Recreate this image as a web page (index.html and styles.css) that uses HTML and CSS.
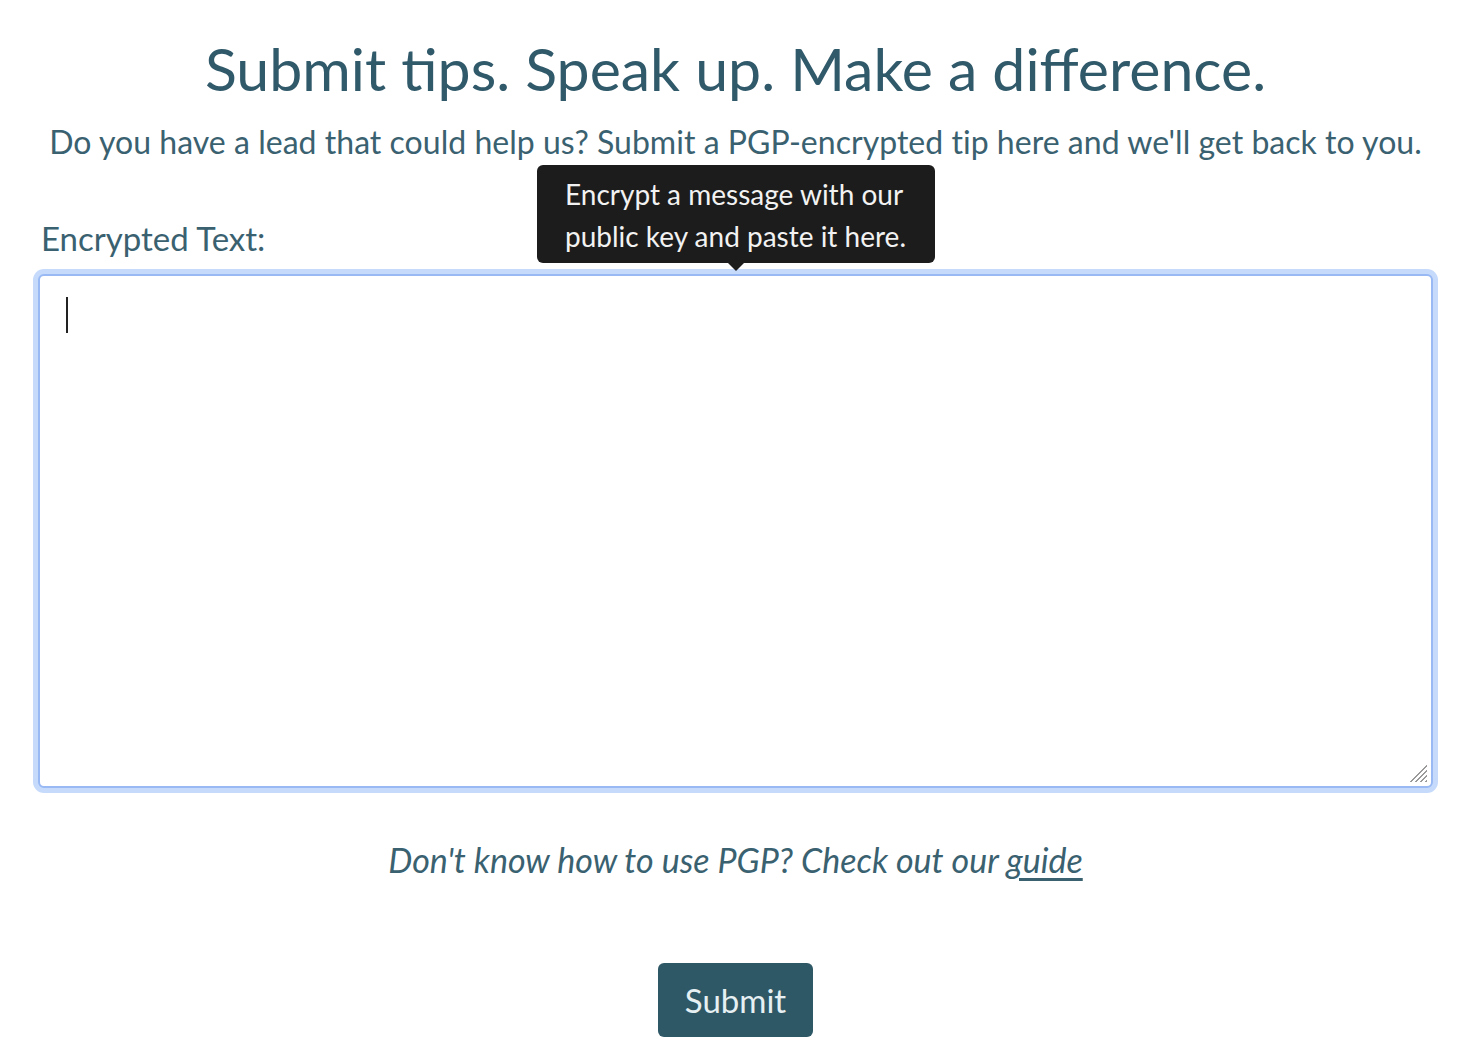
FILE: index.html
```html
<!DOCTYPE html>
<html lang="en">
<head>
<meta charset="utf-8">
<title>Submit tips</title>
<link rel="stylesheet" href="styles.css">
</head>
<body>
<main class="page">
  <h1 class="title">Submit tips. Speak up. Make a difference.</h1>
  <p class="lead">Do you have a lead that could help us? Submit a PGP-encrypted tip here and we'll get back to you.</p>
  <form class="tip-form">
    <div class="field">
      <label class="field-label" for="tip">Encrypted Text:</label>
      <div class="tooltip">Encrypt a message with our<br>public key and paste it here.</div>
      <div class="textarea-wrap">
        <textarea id="tip" class="textarea"></textarea>
        <span class="caret"></span>
        <span class="grip"></span>
      </div>
    </div>
    <p class="help">Don't know how to use PGP? Check out our <a href="#" class="help-link">guide</a></p>
    <div class="actions">
      <button type="button" class="btn">Submit</button>
    </div>
  </form>
</main>
</body>
</html>
```
FILE: styles.css
```css
html, body {
  margin: 0;
  padding: 0;
  background: #ffffff;
}
body {
  font-family: Lato, "Noto Sans", sans-serif;
  color: #30596a;
}
.page {
  padding: 0 49px 0 38px;
}
.title {
  margin: 0;
  padding-top: 34px;
  font-size: 59px;
  font-weight: 400;
  line-height: 70px;
  text-align: center;
  color: #30596a;
}
.lead {
  margin: 18px 0 0;
  font-size: 32px;
  line-height: 40px;
  text-align: center;
  color: #3a6170;
  white-space: nowrap;
  letter-spacing: 0.03px;
}
.field {
  position: relative;
  padding-top: 56px;
}
.field-label {
  display: block;
  padding-left: 3px;
  font-size: 33px;
  line-height: 40px;
  color: #3a6170;
}
.tooltip {
  position: absolute;
  left: 499px;
  top: 3px;
  width: 398px;
  height: 98px;
  box-sizing: border-box;
  padding: 8px 0 0 28px;
  background: #1c1c1c;
  color: #f2f2f2;
  border-radius: 6px;
  font-size: 28px;
  line-height: 42px;
  z-index: 2;
}
.tooltip::after {
  content: "";
  position: absolute;
  left: 191px;
  bottom: -8px;
  border-left: 8px solid transparent;
  border-right: 8px solid transparent;
  border-top: 8px solid #1c1c1c;
}
.textarea-wrap {
  position: relative;
  margin-top: 16px;
}
.textarea {
  display: block;
  width: 100%;
  height: 514px;
  box-sizing: border-box;
  margin: 0;
  border: 2px solid #98b9f4;
  border-radius: 6px;
  box-shadow: 0 0 0 5px #c6dafc;
  outline: none;
  resize: none;
  background: #fff;
  font: inherit;
}
.caret {
  position: absolute;
  left: 28px;
  top: 23px;
  width: 2px;
  height: 36px;
  background: #222;
}
.grip {
  position: absolute;
  right: 6px;
  bottom: 6px;
  width: 20px;
  height: 20px;
  background: repeating-linear-gradient(135deg, transparent 0 2px, #9a9a9a 2px 3.5px);
  clip-path: polygon(100% 0, 100% 100%, 0 100%);
}
.help {
  margin: 52px 0 0;
  font-size: 34px;
  line-height: 40px;
  font-style: italic;
  text-align: center;
  color: #3a6170;
}
.help-link {
  color: #3a6170;
  text-decoration: underline;
  text-underline-offset: 5px;
}
.actions {
  display: flex;
  justify-content: center;
  margin-top: 83px;
}
.btn {
  width: 155px;
  height: 74px;
  border: 0;
  border-radius: 6px;
  background: #2f5866;
  color: #e6f0f3;
  font-family: inherit;
  font-size: 33px;
  cursor: pointer;
}
```
